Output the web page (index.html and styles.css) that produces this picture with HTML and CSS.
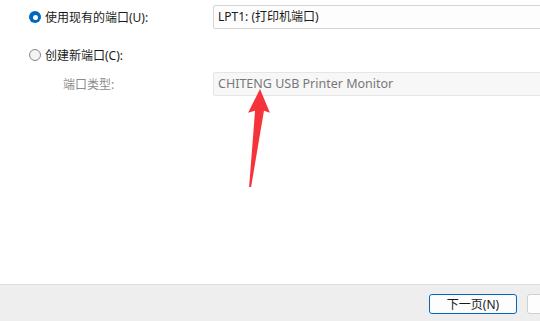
FILE: index.html
```html
<!DOCTYPE html>
<html lang="zh-CN">
<head>
  <meta charset="UTF-8" />
  <title>添加打印机</title>
  <link rel="stylesheet" href="styles.css">
</head>
<body>
  <!-- 端口选择 -->
  <div class="main">
    <div class="row row-first">
      <label class="choice">
        <span class="radio checked"></span>
        <span>使用现有的端口(U):</span>
      </label>
      <div class="field">LPT1: (打印机端口)</div>
    </div>

    <div class="row row-second">
      <label class="choice">
        <span class="radio"></span>
        <span>创建新端口(C):</span>
      </label>
    </div>

    <div class="row row-third">
      <span class="sub-label">端口类型:</span>
      <div class="field disabled">CHITENG USB Printer Monitor</div>
    </div>

    <!-- 红色箭头标注 -->
    <svg class="mark-arrow" viewBox="0 0 30 100" xmlns="http://www.w3.org/2000/svg">
      <polygon fill="#f5333a" points="15,0 25,24 19,22 6,99 4,99 10,22 3,24"/>
    </svg>
  </div>

  <!-- 底部按钮栏 -->
  <div class="footer">
    <button class="btn primary">下一页(N)</button>
    <button class="btn cancel"></button>
  </div>
</body>
</html>
```

FILE: styles.css
```css
/* ========== 页面 ========== */
html,body{margin:0;padding:0;}
body{width:540px;height:321px;overflow:hidden;background:#fff;color:#1a1a1a;
     font-family:"Noto Sans","Noto Sans CJK SC",sans-serif;font-size:12px;}

/* ========== 主区域 ========== */
.main{position:relative;height:284px;padding-top:5px;box-sizing:border-box;}
.row{display:flex;align-items:center;}
.row-first{height:24px;}
.row-second{height:20px;margin-top:16px;}
.row-third{height:24px;margin-top:7px;}

.choice{display:flex;align-items:center;gap:4px;width:184px;padding-left:29px;flex:none;}
.radio{width:12px;height:12px;border-radius:50%;box-sizing:border-box;
       border:1px solid #888;background:#f3f3f3;flex:none;}
.radio.checked{border:none;background:#0067c0;position:relative;}
.radio.checked::after{content:"";position:absolute;left:3.5px;top:3.5px;width:5px;height:5px;
                      border-radius:50%;background:#fff;}

.sub-label{width:150px;padding-left:63px;color:#8c8c8c;flex:none;}

.field{width:340px;height:24px;box-sizing:border-box;padding:0 4px;line-height:22px;flex:none;
       border:1px solid #d6d6d6;border-radius:2px;background:#fdfdfd;white-space:nowrap;}
.field.disabled{color:#777;background:#f7f7f7;border-color:#e6e6e6;font-size:12.5px;}

.mark-arrow{position:absolute;left:245px;top:89px;width:30px;height:99px;}

/* ========== 底部按钮栏 ========== */
.footer{height:37px;box-sizing:border-box;border-top:1px solid #e0e0e0;background:#eeeeee;
        display:flex;justify-content:flex-end;align-items:flex-start;gap:10px;padding-top:9px;overflow:hidden;}
.btn{width:88px;height:20px;box-sizing:border-box;padding:0;border-radius:3px;background:#fdfdfd;
     font-family:inherit;font-size:12px;color:#1a1a1a;border:1px solid #d0d0d0;flex:none;}
.btn.primary{border-color:#0067c0;}
.btn.cancel{margin-right:-75px;}
```
